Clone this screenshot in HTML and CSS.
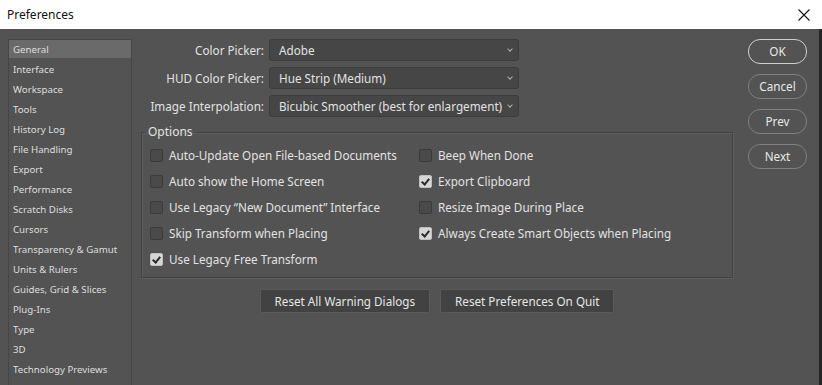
FILE: index.html
```html
<!DOCTYPE html>
<html>
<head>
    <title>Preferences</title>
    <link rel="stylesheet" href="styles.css">
</head>
<body>
    <div class="titlebar">
        <span class="title">Preferences</span>
        <svg class="close" width="12" height="12" viewBox="0 0 12 12">
            <path d="M0.5 0.5 L11.5 11.5 M11.5 0.5 L0.5 11.5" stroke="#111" stroke-width="1.1" fill="none"/>
        </svg>
    </div>
    <div class="window">
        <ul class="sidebar">
            <li class="active">General</li>
            <li>Interface</li>
            <li>Workspace</li>
            <li>Tools</li>
            <li>History Log</li>
            <li>File Handling</li>
            <li>Export</li>
            <li>Performance</li>
            <li>Scratch Disks</li>
            <li>Cursors</li>
            <li>Transparency &amp; Gamut</li>
            <li>Units &amp; Rulers</li>
            <li>Guides, Grid &amp; Slices</li>
            <li>Plug-Ins</li>
            <li>Type</li>
            <li>3D</li>
            <li>Technology Previews</li>
        </ul>

        <div class="content">
            <div class="form">
                <label>Color Picker:</label>
                <div class="select">Adobe<span class="chev"></span></div>
                <label>HUD Color Picker:</label>
                <div class="select">Hue Strip (Medium)<span class="chev"></span></div>
                <label>Image Interpolation:</label>
                <div class="select">Bicubic Smoother (best for enlargement)<span class="chev"></span></div>
            </div>

            <fieldset class="options">
                <legend>Options</legend>
                <div class="checks">
                    <div class="check"><span class="box"></span>Auto-Update Open File-based Documents</div>
                    <div class="check"><span class="box"></span>Beep When Done</div>
                    <div class="check"><span class="box"></span>Auto show the Home Screen</div>
                    <div class="check"><span class="box on"></span>Export Clipboard</div>
                    <div class="check"><span class="box"></span>Use Legacy “New Document” Interface</div>
                    <div class="check"><span class="box"></span>Resize Image During Place</div>
                    <div class="check"><span class="box"></span>Skip Transform when Placing</div>
                    <div class="check"><span class="box on"></span>Always Create Smart Objects when Placing</div>
                    <div class="check"><span class="box on"></span>Use Legacy Free Transform</div>
                </div>
            </fieldset>

            <div class="resets">
                <div class="btn">Reset All Warning Dialogs</div>
                <div class="btn">Reset Preferences On Quit</div>
            </div>
        </div>

        <div class="actions">
            <div class="pill ok">OK</div>
            <div class="pill">Cancel</div>
            <div class="pill">Prev</div>
            <div class="pill">Next</div>
        </div>
        <div class="edge"></div>
    </div>
</body>
</html>
```

FILE: styles.css
```css
body {
    margin: 0;
    font-family: "Noto Sans", "Open Sans", sans-serif;
    font-size: 11.7px;
    background: #535353;
    overflow: hidden;
}
.titlebar {
    height: 29px;
    background: #fff;
    display: flex;
    align-items: center;
    justify-content: space-between;
    padding: 0 12px 0 7px;
    color: #111;
}
.title {
    font-size: 12px;
}
.window {
    display: flex;
    height: 356px;
    color: #e2e2e2;
}
.sidebar {
    list-style: none;
    margin: 10px 0 0 8px;
    padding: 0;
    width: 122px;
    border: 1px solid #464646;
    border-bottom: none;
    font-size: 9.7px;
    color: #dedede;
}
.sidebar li {
    height: 19px;
    padding-top: 1px;
    line-height: 18px;
    padding-left: 4px;
}
.sidebar li.active {
    background: #6a6a6a;
    height: 17px;
    margin-bottom: 2px;
}
.content {
    margin-left: 9px;
    padding-top: 10px;
    width: 592px;
}
.form {
    display: grid;
    grid-template-columns: 123px 250px;
    column-gap: 5px;
    row-gap: 6px;
}
.form label {
    text-align: right;
    line-height: 22px;
    white-space: nowrap;
}
.select {
    position: relative;
    height: 20px;
    line-height: 20px;
    background: #464646;
    border: 1px solid #3c3c3c;
    border-radius: 3px;
    padding-left: 9px;
    white-space: nowrap;
    overflow: hidden;
}
.chev {
    position: absolute;
    right: 6px;
    top: 7px;
    width: 3px;
    height: 3px;
    border-right: 1px solid #b0b0b0;
    border-bottom: 1px solid #b0b0b0;
    transform: rotate(45deg);
}
.options {
    margin: 7px 0 0;
    padding: 0 0 5px 0;
    border: 1px solid #424242;
    box-shadow: inset 1px 1px 0 #5e5e5e, 1px 1px 0 #5e5e5e;
}
.options legend {
    margin-left: 3px;
    padding: 0 3px;
    line-height: 16px;
    font-size: 12px;
}
.checks {
    display: grid;
    grid-template-columns: 269px 1fr;
    margin: 2px 0 0 8px;
}
.check {
    height: 26px;
    display: flex;
    align-items: center;
    white-space: nowrap;
}
.box {
    width: 11px;
    height: 11px;
    border: 1px solid #3a3a3a;
    border-radius: 2px;
    background: #4a4a4a;
    margin-right: 6px;
    position: relative;
}
.box.on {
    background: #d6d6d6;
    border-color: #c0c0c0;
}
.box.on::after {
    content: "";
    position: absolute;
    left: 3px;
    top: 1px;
    width: 3px;
    height: 6px;
    border-right: 2px solid #2a2a2a;
    border-bottom: 2px solid #2a2a2a;
    transform: rotate(40deg);
}
.resets {
    display: flex;
    justify-content: center;
    gap: 10px;
    margin-top: 11px;
}
.btn {
    height: 22px;
    line-height: 22px;
    padding: 0 14px;
    background: #424242;
    border: 1px solid #5a5a5a;
    border-radius: 2px;
    color: #e6e6e6;
}
.actions {
    margin-left: 15px;
    padding-top: 10px;
    display: flex;
    flex-direction: column;
    gap: 10px;
}
.pill {
    width: 57px;
    height: 23px;
    line-height: 23px;
    text-align: center;
    border: 1px solid #808080;
    border-radius: 12px;
    color: #e8e8e8;
}
.pill.ok {
    border-color: #d0d0d0;
}
.edge {
    margin-left: auto;
    width: 3px;
    background: #262626;
}
```
